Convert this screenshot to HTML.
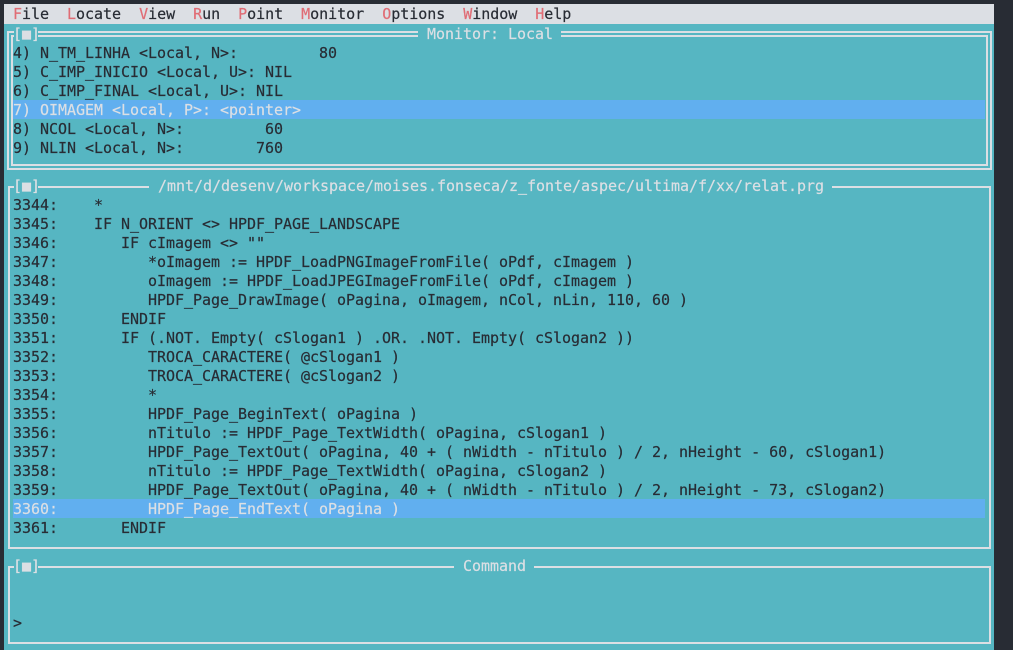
<!DOCTYPE html>
<html><head><meta charset="utf-8">
<style>
*{margin:0;padding:0;box-sizing:border-box}
html,body{width:1013px;height:650px;overflow:hidden;background:#282c34}
#t{position:absolute;left:4px;top:4px;width:990px;height:646px;background:#56b6c2}
.menu{position:absolute;left:4px;top:4px;width:990px;height:20px;background:#dcdfe4}
.l{position:absolute;left:13px;height:19px;line-height:19px;font-family:"DejaVu Sans Mono","Liberation Mono",monospace;font-size:15px;letter-spacing:-0.03px;color:#282c34;white-space:pre;-webkit-text-stroke:0.2px currentColor}
.r{color:#e06c75}
.hl{position:absolute;left:13px;width:972px;height:19px;background:#61afef}
.w{color:#dcdfe4}
.b2{position:absolute;border:2px solid #dcdfe4}
.gap{position:absolute;height:8px;background:#56b6c2}
.ic{position:absolute;font-family:"DejaVu Sans Mono",monospace;font-size:15px;letter-spacing:-0.03px;color:#dcdfe4;line-height:19px;white-space:pre;-webkit-text-stroke:0.2px currentColor}
</style></head><body>
<div id="t"></div>
<div class="menu"></div>
<div class="l" style="top:5px"><span class="r">F</span>ile  <span class="r">L</span>ocate  <span class="r">V</span>iew  <span class="r">R</span>un  <span class="r">P</span>oint  <span class="r">M</span>onitor  <span class="r">O</span>ptions  <span class="r">W</span>indow  <span class="r">H</span>elp</div>

<div class="b2" style="left:7px;top:31px;width:985px;height:139px"></div>
<div class="b2" style="left:11px;top:35px;width:977px;height:131px"></div>
<div class="gap" style="left:14px;top:29px;width:24px"></div>
<div class="ic" style="left:13px;top:25px">[■]</div>
<div class="gap" style="left:418px;top:29px;width:143px"></div>
<div class="ic" style="left:427px;top:25px">Monitor: Local</div>

<div class="l" style="top:44px">4) N_TM_LINHA &lt;Local, N&gt;:         80</div>
<div class="l" style="top:63px">5) C_IMP_INICIO &lt;Local, U&gt;: NIL</div>
<div class="l" style="top:82px">6) C_IMP_FINAL &lt;Local, U&gt;: NIL</div>
<div class="hl" style="top:100px"></div>
<div class="l w" style="top:101px">7) OIMAGEM &lt;Local, P&gt;: &lt;pointer&gt;</div>
<div class="l" style="top:120px">8) NCOL &lt;Local, N&gt;:         60</div>
<div class="l" style="top:139px">9) NLIN &lt;Local, N&gt;:        760</div>

<div class="b2" style="left:8px;top:186px;width:983px;height:363px"></div>
<div class="gap" style="left:14px;top:183px;width:24px"></div>
<div class="ic" style="left:13px;top:177px">[■]</div>
<div class="gap" style="left:149px;top:183px;width:683px"></div>
<div class="ic" style="left:158px;top:177px">/mnt/d/desenv/workspace/moises.fonseca/z_fonte/aspec/ultima/f/xx/relat.prg</div>

<div class="l" style="top:196px">3344:    *</div>
<div class="l" style="top:215px">3345:    IF N_ORIENT &lt;&gt; HPDF_PAGE_LANDSCAPE</div>
<div class="l" style="top:234px">3346:       IF cImagem &lt;&gt; ""</div>
<div class="l" style="top:253px">3347:          *oImagem := HPDF_LoadPNGImageFromFile( oPdf, cImagem )</div>
<div class="l" style="top:272px">3348:          oImagem := HPDF_LoadJPEGImageFromFile( oPdf, cImagem )</div>
<div class="l" style="top:291px">3349:          HPDF_Page_DrawImage( oPagina, oImagem, nCol, nLin, 110, 60 )</div>
<div class="l" style="top:310px">3350:       ENDIF</div>
<div class="l" style="top:329px">3351:       IF (.NOT. Empty( cSlogan1 ) .OR. .NOT. Empty( cSlogan2 ))</div>
<div class="l" style="top:348px">3352:          TROCA_CARACTERE( @cSlogan1 )</div>
<div class="l" style="top:367px">3353:          TROCA_CARACTERE( @cSlogan2 )</div>
<div class="l" style="top:386px">3354:          *</div>
<div class="l" style="top:405px">3355:          HPDF_Page_BeginText( oPagina )</div>
<div class="l" style="top:424px">3356:          nTitulo := HPDF_Page_TextWidth( oPagina, cSlogan1 )</div>
<div class="l" style="top:443px">3357:          HPDF_Page_TextOut( oPagina, 40 + ( nWidth - nTitulo ) / 2, nHeight - 60, cSlogan1)</div>
<div class="l" style="top:462px">3358:          nTitulo := HPDF_Page_TextWidth( oPagina, cSlogan2 )</div>
<div class="l" style="top:481px">3359:          HPDF_Page_TextOut( oPagina, 40 + ( nWidth - nTitulo ) / 2, nHeight - 73, cSlogan2)</div>
<div class="hl" style="top:499px"></div>
<div class="l w" style="top:500px">3360:          HPDF_Page_EndText( oPagina )</div>
<div class="l" style="top:519px">3361:       ENDIF</div>

<div class="b2" style="left:8px;top:566px;width:983px;height:78px"></div>
<div class="gap" style="left:14px;top:563px;width:24px"></div>
<div class="ic" style="left:13px;top:557px">[■]</div>
<div class="gap" style="left:454px;top:563px;width:80px"></div>
<div class="ic" style="left:463px;top:557px">Command</div>
<div class="l" style="top:614px">&gt;</div>
</body></html>
